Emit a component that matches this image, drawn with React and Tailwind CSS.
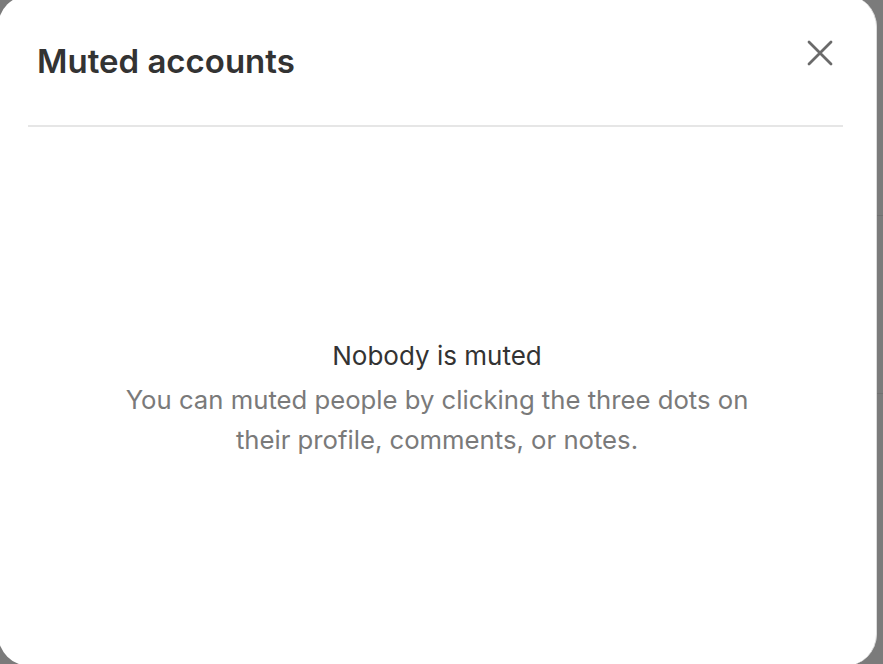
import React from "react";

const App = () => {
  return (
    <div className="relative h-[664px] w-[883px] overflow-hidden bg-[#7b7b7b] font-['Inter',sans-serif]">
      {/* page behind the overlay */}
      <div className="flex flex-col">
        <div className="h-[215px]" />
        <div className="h-px bg-[#707070]" />
        <div className="h-[177px]" />
        <div className="h-px bg-[#707070]" />
      </div>

      {/* Modal */}
      <div className="absolute left-[-2px] top-[-5px] flex h-[671px] w-[879px] flex-col rounded-[32px] border-r border-[#dcdcdc] bg-white">
        {/* Header */}
        <div className="flex items-start justify-between pl-[39px] pr-[42px] pt-[47px]">
          <h1 className="text-[33px] font-semibold leading-[38px] text-[#333333]">
            Muted accounts
          </h1>

          <button className="mt-[-3px] text-[#6a6a6a]">
            <svg
              width="28"
              height="28"
              viewBox="0 0 28 28"
              fill="none"
              stroke="currentColor"
              strokeWidth="2.8"
              strokeLinecap="round"
            >
              <path d="M3 3 L25 25 M25 3 L3 25" />
            </svg>
          </button>
        </div>

        {/* Divider */}
        <div className="ml-[30px] mr-[33px] mt-[45px] h-[2px] bg-[#e6e6e6]" />

        {/* Empty state */}
        <div className="flex flex-1 flex-col items-center justify-center pt-[8px] text-center">
          <p className="text-[26px] leading-[30px] text-[#333333]">
            Nobody is muted
          </p>

          <p className="mt-[9px] text-[25.7px] leading-[40px] text-[#7a7a7a]">
            You can muted people by clicking the three dots on
            <br />
            their profile, comments, or notes.
          </p>
        </div>
      </div>
    </div>
  );
};

export default App;
